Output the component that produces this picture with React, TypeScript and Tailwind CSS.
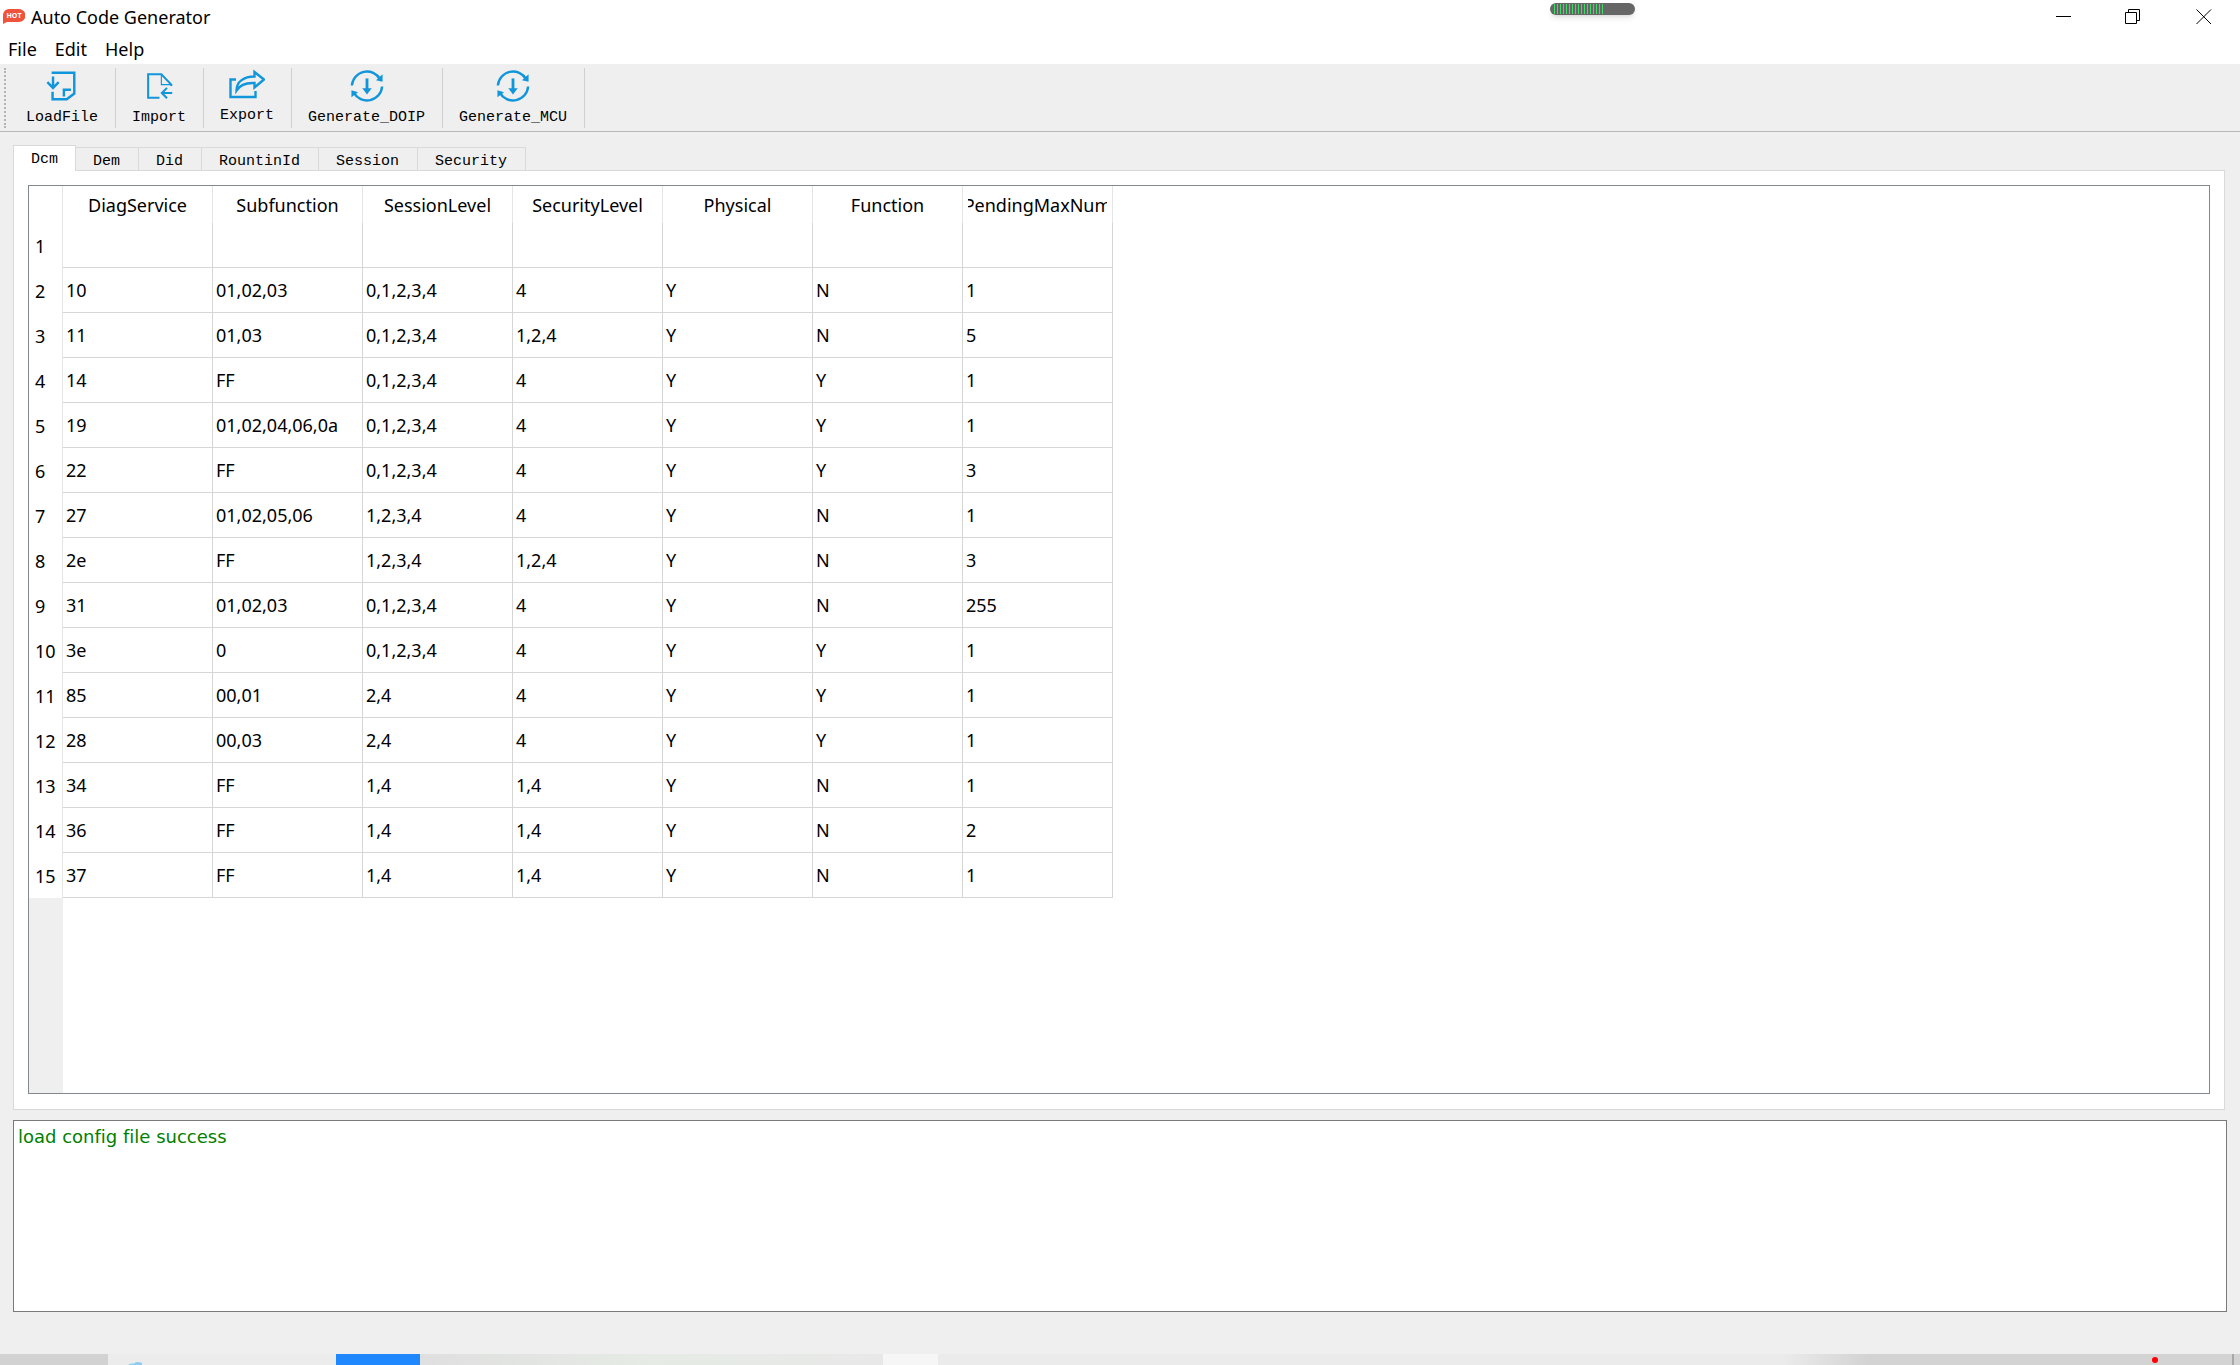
import { useState, type ReactNode } from 'react';

const MENUS = ['File', 'Edit', 'Help'];

const TABS = ['Dcm', 'Dem', 'Did', 'RountinId', 'Session', 'Security'];

const COLUMNS = [
  'DiagService',
  'Subfunction',
  'SessionLevel',
  'SecurityLevel',
  'Physical',
  'Function',
  'PendingMaxNum',
];

const ROWS = [
  ['', '', '', '', '', '', ''],
  ['10', '01,02,03', '0,1,2,3,4', '4', 'Y', 'N', '1'],
  ['11', '01,03', '0,1,2,3,4', '1,2,4', 'Y', 'N', '5'],
  ['14', 'FF', '0,1,2,3,4', '4', 'Y', 'Y', '1'],
  ['19', '01,02,04,06,0a', '0,1,2,3,4', '4', 'Y', 'Y', '1'],
  ['22', 'FF', '0,1,2,3,4', '4', 'Y', 'Y', '3'],
  ['27', '01,02,05,06', '1,2,3,4', '4', 'Y', 'N', '1'],
  ['2e', 'FF', '1,2,3,4', '1,2,4', 'Y', 'N', '3'],
  ['31', '01,02,03', '0,1,2,3,4', '4', 'Y', 'N', '255'],
  ['3e', '0', '0,1,2,3,4', '4', 'Y', 'Y', '1'],
  ['85', '00,01', '2,4', '4', 'Y', 'Y', '1'],
  ['28', '00,03', '2,4', '4', 'Y', 'Y', '1'],
  ['34', 'FF', '1,4', '1,4', 'Y', 'N', '1'],
  ['36', 'FF', '1,4', '1,4', 'Y', 'N', '2'],
  ['37', 'FF', '1,4', '1,4', 'Y', 'N', '1'],
];

function LoadFileIcon() {
  return (
    <svg width="36" height="36" viewBox="0 0 36 36" fill="none" stroke="#1296db" strokeWidth="2.6">
      <path d="M7 4H31V26L23 32H8V24" />
      <path d="M27.500 22H20V29" />
      <path d="M8.500 8V20M2.500 14L8.500 20L14.500 14" />
    </svg>
  );
}

function ImportIcon() {
  return (
    <svg width="36" height="36" viewBox="0 0 36 36" fill="none" stroke="#1296db" strokeWidth="2.2">
      <path d="M18.500 30.500H6.500V5.500H20.500L31 16.500V18" />
      <path d="M20.500 5.500V16.500H31" strokeWidth="1.2" />
      <path d="M32 25.500H21M26.500 20L21 25.500L26.500 31" />
    </svg>
  );
}

function ExportIcon() {
  return (
    <svg width="36" height="32" viewBox="0 0 36 32" fill="none" stroke="#1296db" strokeWidth="2.4">
      <path d="M7 10.500H1.500V28H26.500V22" />
      <path d="M25.500 3L35 10.500L25.500 18.500V14C17 13.500 11 16 7.500 21.500C7.500 12.500 15 7.500 25.500 7.500Z" />
    </svg>
  );
}

function GenerateIcon() {
  return (
    <svg width="36" height="36" viewBox="0 0 36 36" fill="none" stroke="#1296db" strokeWidth="2.6">
      <path d="M2 17.500A16 16 0 0 1 32 11" />
      <path d="M34 18.500A16 16 0 0 1 4 25" />
      <path d="M34.500 5.500V13.500L27.500 12Z" fill="#1296db" stroke="none" />
      <path d="M1.500 22.500L8.500 24.500L1.500 30Z" fill="#1296db" stroke="none" />
      <path d="M18 10V22" strokeWidth="3" />
      <path d="M13 20.500H23L18 27Z" fill="#1296db" stroke="none" />
    </svg>
  );
}

const TOOLS: { label: string; icon: ReactNode }[] = [
  { label: 'LoadFile', icon: <LoadFileIcon /> },
  { label: 'Import', icon: <ImportIcon /> },
  { label: 'Export', icon: <ExportIcon /> },
  { label: 'Generate_DOIP', icon: <GenerateIcon /> },
  { label: 'Generate_MCU', icon: <GenerateIcon /> },
];

function HotBadge() {
  return (
    <svg width="22" height="16" viewBox="0 0 22 16" aria-hidden="true">
      <path d="M6 0H16A6 6 0 0 1 16 13H4L0 15V6A6 6 0 0 1 6 0Z" fill="#f0533c" />
      <text
        x="11"
        y="9"
        textAnchor="middle"
        fill="#ffffff"
        className="font-['Open_Sans'] text-[7px] font-bold"
      >
        HOT
      </text>
    </svg>
  );
}

function VolumeMeter() {
  return (
    <div className="absolute top-[3px] left-[1550px] flex h-3 w-[85px] gap-[2px] rounded-md bg-[#666666] px-1 py-px shadow-md">
      {Array.from({ length: 17 }, (_, i) => (
        <span key={i} className="w-px bg-[#3ddc64]" />
      ))}
    </div>
  );
}

function TitleBar() {
  return (
    <header className="relative flex h-[34px] items-center justify-between bg-white pl-[3px]">
      <div className="flex items-center gap-[6px]">
        <HotBadge />
        <h1 className="text-lg leading-6">Auto Code Generator</h1>
      </div>
      <VolumeMeter />
      <div className="flex h-full">
        <button type="button" aria-label="Minimize" className="flex w-[70px] items-center justify-center">
          <svg width="16" height="16" viewBox="0 0 16 16" stroke="#000000">
            <path d="M1 7.500H16" />
          </svg>
        </button>
        <button type="button" aria-label="Restore" className="flex w-[70px] items-center justify-center">
          <svg width="16" height="16" viewBox="0 0 16 16" fill="none" stroke="#000000">
            <path d="M.5 3.500H11.500V14.500H.5ZM3.500 3.500V.5H14.500V11.500H11.500" />
          </svg>
        </button>
        <button type="button" aria-label="Close" className="flex w-[72px] items-center justify-center">
          <svg width="16" height="16" viewBox="0 0 16 16" stroke="#000000">
            <path d="M.5 .5L15 15M15 .5L.5 15" />
          </svg>
        </button>
      </div>
    </header>
  );
}

function ToolBar() {
  return (
    <div role="toolbar" className="flex h-[67px] border-b border-[#b8b8b8] py-[3px] pl-1">
      <span className="w-[6px] border-l-2 border-dotted border-[#b4b4b4]" />
      {TOOLS.map((tool) => (
        <button
          key={tool.label}
          type="button"
          className="flex flex-col items-center gap-[5px] border-r border-[#d0d0d0] pt-px pr-[17px] pl-4 font-['Liberation_Mono',monospace] text-[15px] leading-5"
        >
          {tool.icon}
          {tool.label}
        </button>
      ))}
    </div>
  );
}

function ServiceTable() {
  return (
    <table className="w-[1084px] table-fixed border-separate border-spacing-0 text-lg leading-6">
      <thead>
        <tr className="h-[37px]">
          <th className="w-[34px] border-r border-[#e5e5e5] p-0" />
          {COLUMNS.map((column) => (
            <th key={column} scope="col" className="border-r border-[#e5e5e5] px-[5px] py-0 font-normal">
              <div className="flex justify-center overflow-hidden whitespace-nowrap">{column}</div>
            </th>
          ))}
        </tr>
      </thead>
      <tbody>
        {ROWS.map((row, rowIndex) => (
          <tr key={rowIndex} className="h-[45px]">
            <th scope="row" className="border-r border-[#e5e5e5] py-0 pr-0 pl-[6px] text-left font-normal">
              {rowIndex + 1}
            </th>
            {row.map((value, i) => (
              <td key={COLUMNS[i]} className="border-r border-b border-[#d6d6d6] py-0 pr-0 pl-[3px]">
                {value}
              </td>
            ))}
          </tr>
        ))}
      </tbody>
    </table>
  );
}

function TaskBar() {
  return (
    <footer className="flex h-[11px] overflow-hidden bg-[#ebebeb]">
      <div className="w-[108px] bg-[#d2d2d2]" />
      <div className="flex w-[228px] items-end bg-[#ececec] pl-5">
        <svg width="16" height="3" viewBox="0 0 16 3">
          <path d="M0 3Q1 1 6 1.500Q9 -1 14 1V3Z" fill="#8ccdf0" />
        </svg>
      </div>
      <div className="w-[84px] bg-[#1f88ff]" />
      <div className="w-[463px] bg-linear-to-r from-[#dfdfdf] via-[#e6ebe5] to-[#e8e8e8]" />
      <div className="w-[55px] bg-[#f6f6f6]" />
      <div className="w-[845px] bg-[#ebebec]" />
      <div className="w-[85px] bg-linear-to-r from-[#ebebec] to-[#d3d3d3]" />
      <div className="flex flex-1 items-center justify-end gap-[74px] bg-[#d3d3d3] pr-[6px]">
        <span className="size-[6px] rounded-full bg-[#ff0000]" />
        <span className="h-full w-[2px] bg-[#a8a8a8]" />
      </div>
    </footer>
  );
}

export default function App() {
  const [activeTab, setActiveTab] = useState('Dcm');

  return (
    <div className="flex h-screen flex-col bg-[#efefef] font-['Noto_Sans','Open_Sans',sans-serif] text-black">
      <TitleBar />
      <nav className="flex h-[31px] items-center gap-[18px] border-b border-[#f0f0f0] bg-white pl-2 text-lg leading-6">
        {MENUS.map((menu) => (
          <button key={menu} type="button">
            {menu}
          </button>
        ))}
      </nav>
      <ToolBar />

      <main className="flex min-h-0 flex-1 flex-col px-[13px] pt-[13px] pb-[42px]">
        <div role="tablist" className="flex h-[25px] items-end font-['Liberation_Mono',monospace] text-[15px] leading-4">
          {TABS.map((tab) => (
            <button
              key={tab}
              type="button"
              role="tab"
              aria-selected={tab === activeTab}
              onClick={() => setActiveTab(tab)}
              className={
                tab === activeTab
                  ? 'relative -mb-px flex h-[26px] items-start border border-b-0 border-[#d9d9d9] bg-white px-[17px] pt-[6px]'
                  : 'flex h-[23px] items-end border-t border-r border-[#d9d9d9] pr-[18px] pl-[17px]'
              }
            >
              {tab}
            </button>
          ))}
        </div>
        <section className="mr-[2px] flex min-h-0 flex-1 flex-col border border-[#d9d9d9] bg-white p-[14px] pb-[15px]">
          <div className="flex min-h-0 flex-1 flex-col border border-[#828790]">
            <ServiceTable />
            <div className="w-[34px] flex-1 bg-[#efefef]" />
          </div>
        </section>
        <textarea
          readOnly
          aria-label="Log"
          value="load config file success"
          className="mt-[10px] block h-48 w-full resize-none border border-[#7a7a7a] bg-white px-1 py-1 font-['DejaVu_Sans',sans-serif] text-lg leading-6 text-[#008000] outline-none [font-variant-ligatures:none]"
        />
      </main>
      <TaskBar />
    </div>
  );
}
